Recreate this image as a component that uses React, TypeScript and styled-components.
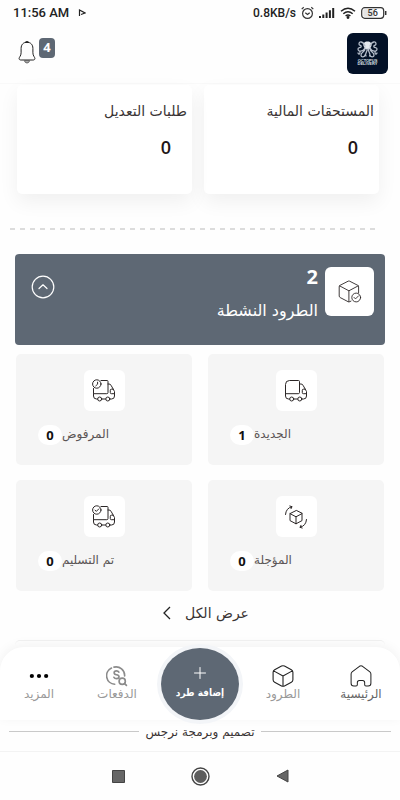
import React from 'react';
import styled, { createGlobalStyle } from 'styled-components';

const slate = '#5e6874';
const arabic = '"DejaVu Sans", sans-serif';

const GlobalStyle = createGlobalStyle`
  * { box-sizing: border-box; }
  body { margin: 0; background: #fefefe; color: #3a3434; font-family: ${arabic}; }
  button { border: 0; padding: 0; background: none; font: inherit; color: inherit; cursor: pointer; }
  a { color: inherit; text-decoration: none; }
  h2, h3, p { margin: 0; font-weight: 400; }
  svg { display: block; flex: none; }
`;

const Screen = styled.div`
  display: flex;
  flex-direction: column;
  min-height: 100vh;
`;

const StatusBar = styled.div`
  display: flex;
  align-items: center;
  height: 26px;
  padding: 0 13px;
  font: 500 13px/24px Roboto, sans-serif;
  color: #222;
`;

const StatusGroup = styled.div<{ $end?: boolean }>`
  display: flex;
  align-items: center;
  gap: ${(p) => (p.$end ? 5 : 9)}px;
  margin-left: ${(p) => (p.$end ? 'auto' : '0')};
  font-size: ${(p) => (p.$end ? 12 : 13)}px;
`;

const Header = styled.header`
  display: flex;
  justify-content: space-between;
  align-items: flex-start;
  height: 58px;
  padding: 7px 12px 0 18px;
  border-bottom: 1px solid #f9f9f9;
`;

const BellButton = styled.button`
  display: flex;
  align-items: flex-end;
  gap: 3px;
  padding-top: 5px;
`;

const BellBadge = styled.span`
  width: 16px;
  height: 20px;
  margin-bottom: 6px;
  border-radius: 4px;
  background: ${slate};
  color: #fff;
  font: 700 13px/19px "Open Sans", sans-serif;
`;

const Content = styled.main`
  display: flex;
  flex-direction: column;
  flex: 1;
`;

const SummaryRow = styled.section`
  display: grid;
  grid-template-columns: 1fr 1fr;
  gap: 12px;
  padding: 1px 21px 0 17px;
`;

const SummaryCard = styled.article`
  height: 109px;
  padding: 14px 5px 0;
  border-radius: 5px;
  background: #fff;
  box-shadow: 0 8px 20px rgba(0, 0, 0, 0.06);
`;

const SummaryTitle = styled.h3`
  font-size: 14px;
  line-height: 24px;
  white-space: nowrap;
`;

const SummaryValue = styled.p`
  padding: 12px 16px 0 0;
  font: 600 18px/24px "Open Sans", sans-serif;
  color: #211517;
`;

const Dashes = styled.hr`
  height: 2px;
  margin: 34px 20px 24px 10px;
  border: 0;
  background: repeating-linear-gradient(90deg, #dcdcdc 0 5px, transparent 5px 10px);
`;

const ActivePanel = styled.section`
  display: flex;
  align-items: flex-start;
  height: 91px;
  margin: 0 15px;
  padding: 13px 11px 0 16px;
  border-radius: 4px;
  background: ${slate};
  color: #fff;
`;

const IconTile = styled.div<{ $size: number }>`
  display: grid;
  place-items: center;
  width: ${(p) => p.$size}px;
  height: ${(p) => p.$size}px;
  border-radius: 6px;
  background: #fff;
  color: #2b2626;
`;

const PanelText = styled.div`
  flex: 1;
  padding-right: 7px;
`;

const PanelCount = styled.p`
  font: 700 20px/20px "Noto Sans", sans-serif;
`;

const PanelTitle = styled.h2`
  padding-top: 11px;
  font-size: 16px;
  line-height: 26px;
`;

const CollapseButton = styled.button`
  margin-top: 8px;
`;

const TileGrid = styled.section`
  display: grid;
  grid-template-columns: 1fr 1fr;
  gap: 15px 16px;
  padding: 9px 16px 0;
`;

const Tile = styled.a`
  display: flex;
  flex-direction: column;
  align-items: center;
  height: 111px;
  padding-top: 16px;
  border-radius: 5px;
  background: #f5f5f5;
`;

const TileCaption = styled.div`
  display: flex;
  justify-content: flex-end;
  align-items: flex-start;
  align-self: stretch;
  margin-top: 14px;
  padding-left: 22px;
  font-size: 12px;
  line-height: 18px;
  color: #5a5454;
`;

const CountPill = styled.span`
  width: 24px;
  height: 20px;
  border-radius: 10px;
  background: #fff;
  color: #111;
  text-align: center;
  font: 700 13px/20px "Open Sans", sans-serif;
`;

const ViewAll = styled.a`
  display: flex;
  align-items: center;
  align-self: center;
  gap: 14px;
  margin-top: 8px;
  padding-left: 12px;
  height: 28px;
  font-size: 14px;
`;

const NextSection = styled.div`
  height: 7px;
  margin: 13px 15px 0;
  border-top: 1px solid #f1f1f1;
  border-radius: 5px 5px 0 0;
`;

const BottomNav = styled.nav`
  display: grid;
  grid-template-columns: 1fr 1fr 88px 1fr 1fr;
  height: 73px;
  border-radius: 24px 24px 0 0;
  background: #fff;
  box-shadow: 0 -2px 12px rgba(0, 0, 0, 0.05);
`;

const NavItem = styled.a<{ $active?: boolean }>`
  display: flex;
  flex-direction: column;
  align-items: center;
  padding-top: 18px;
  color: ${(p) => (p.$active ? '#666' : '#999')};
  font-size: 12px;
  line-height: 14px;
  white-space: nowrap;
`;

const NavIcon = styled.span<{ $muted?: boolean }>`
  display: grid;
  place-items: center;
  height: 22px;
  color: ${(p) => (p.$muted ? '#8b8b8b' : '#222')};
`;

const AddButton = styled.button`
  display: flex;
  flex-direction: column;
  align-items: center;
  justify-self: center;
  width: 78px;
  height: 72px;
  margin-top: 1px;
  padding-top: 19px;
  border-radius: 50%;
  background: ${slate};
  box-shadow: 0 0 0 4px #f3f5f8;
  color: #fff;
  font: 700 10px/14px "DejaVu Sans Condensed", "DejaVu Sans", sans-serif;
  gap: 7px;
`;

const Credit = styled.footer`
  display: flex;
  align-items: center;
  gap: 7px;
  height: 32px;
  padding: 0 9px 8px;
  border-bottom: 1px solid #f3f3f3;
  font-size: 12px;
  line-height: 20px;

  &::before,
  &::after {
    content: '';
    flex: 1;
    height: 1px;
    background: #c9c9c9;
  }
`;

const SystemBar = styled.div`
  display: flex;
  justify-content: center;
  align-items: center;
  gap: 66px;
  height: 48px;
`;

type StrokeProps = { size: number; width?: number; view?: number; children: React.ReactNode };

const Stroke = ({ size, children, width = 1, view = 24 }: StrokeProps) => (
  <svg width={size} height={size} viewBox={`0 0 ${view} ${view}`} fill="none" stroke="currentColor" strokeWidth={width} strokeLinecap="round" strokeLinejoin="round" aria-hidden="true">
    {children}
  </svg>
);

const Cube = () => (
  <Stroke size={22} width={1.2}>
    <path d="M10.4 1.2 2.9 5.1Q1.2 6 1.2 7.8v8.4q0 1.8 1.7 2.7l7.5 3.9q1.6.8 3.2 0l7.5-3.9q1.7-.9 1.7-2.7V7.8q0-1.8-1.7-2.7l-7.5-3.9q-1.6-.8-3.2 0ZM1.8 6.4 12 12l10.2-5.6M12 12v11" />
  </Stroke>
);

const CubeCheck = () => (
  <Stroke size={24} width={0.9}>
    <path d="M13 21.1 11.7 21.7q-.8.3-1.6 0l-8-4.2q-.9-.5-.9-1.5V6.8q0-1 .9-1.5l8-4.1q.8-.4 1.6 0l8 4.1q.9.5.9 1.5v6.1M1.5 5.8l9.4 5 9.4-5M10.9 10.8v10.9" />
    <circle cx="18.2" cy="17.5" r="4.4" fill="#fff" />
    <path d="m16 17.4 1.5 1.5 3-3" />
  </Stroke>
);

const Truck = ({ mark }: { mark?: 'clock' | 'check' }) => (
  <Stroke size={24} width={1}>
    {mark ? <path d="M9 1.5h6.1q.9 0 .9.9v11.1q0 1.2-1.2 1.2H1.5V9.5" /> : <path d="M1.5 14.7V5.5q0-4 4-4h9q1 0 1 1v11q0 1.2-1.2 1.2H1.5" />}
    <path d="M1.5 14.7V17q0 3 3 3h1M10 20h3.5M18 20h1.5q3 0 3-3v-4.5L19 6.2Q18.2 5 17 5h-1M22.5 14.7h-3.2q-1 0-1-1v-2.5q0-1 1-1h1.9" />
    <circle cx="7.7" cy="20" r="2" />
    <circle cx="15.8" cy="20" r="2" />
    {mark && <circle cx="4.8" cy="5" r="4.2" fill="#fff" />}
    {mark === 'clock' && <path d="M5.6 3.2v2L3.8 6.8" />}
    {mark === 'check' && <path d="m3 5.1 1.3 1.3 2.6-2.6" />}
  </Stroke>
);

const CubeCycle = () => (
  <Stroke size={24} width={1}>
    <path d="M12 5.6 6 8.6v7l6 3.2 6-3.2v-7ZM6 8.6l6 3.2 6-3.2M12 11.8v7M1.5 9.5Q2 3 7.8 1.8M5.8 1l2.2.7-1 2M22.5 14.5q-.5 6.5-6.3 7.7M18.2 23l-2.2-.7 1-2" />
  </Stroke>
);

const House = () => (
  <Stroke size={22} width={1.1}>
    <path d="M1.2 9.8q0-1.5 1.1-2.4l8-6q1.7-1.2 3.4 0l8 6q1.1.9 1.1 2.4V20q0 3-3 3h-2.4q-1.4 0-1.4-1.4v-2.4q0-2.2-2.2-2.2h-3.6Q8 17 8 19.2v2.4Q8 23 6.600 23H4.200q-3 0-3-3Z" />
  </Stroke>
);

const Payments = () => (
  <Stroke size={22} width={1.8}>
    <path d="M9.5 21A9.3 9.3 0 0 1 6 3.300M8.700 2.300A9.300 9.300 0 0 1 20.3 12M14 7.8q-.7-1.400-2.600-1.400-2.500 0-2.500 2 0 1.800 2.500 2.200 2.800.4 2.800 2.300 0 2-2.700 2-2 0-2.800-1.500" />
    <circle cx="17.7" cy="17.7" r="3.4" />
    <path d="m20.300 20.300 2 2" />
  </Stroke>
);

const Dots = () => (
  <svg width="22" height="22" viewBox="0 0 24 24" fill="#000" aria-hidden="true">
    <circle cx="4.200" cy="12" r="2.300" /><circle cx="12" cy="12" r="2.300" /><circle cx="19.800" cy="12" r="2.300" />
  </svg>
);

const Bell = () => (
  <svg width="18" height="23" viewBox="0 0 18 23" fill="none" stroke="#222" aria-hidden="true">
    <path d="M9 1.2C5.4 1.2 3.1 3.7 3.1 7.3v4.5C3.1 15 1.1 16 1.1 17.6c0 1 .8 1.4 2 1.4h11.8c1.2 0 2-.4 2-1.4 0-1.6-2-2.6-2-5.8V7.3C14.9 3.7 12.6 1.2 9 1.2Z" />
    <path d="M7 1.5Q9-.4 11 1.5Z" fill="#222" />
    <path d="M6.3 19.5Q7 22 9 22t2.7-2.5Z" fill="#aaa" stroke="#666" />
  </svg>
);

const Logo = () => (
  <svg width="41" height="41" viewBox="0 0 41 41" role="img" aria-label="Octopus Delivery">
    <rect width="41" height="41" rx="6" fill="#031127" />
    <path d="M20.5 8.500c-3 0-4.500 2-4 4.300.2 1.200 1.200 2 1.500 3.200h5c.3-1.200 1.300-2 1.500-3.200.5-2.300-1-4.300-4-4.300Z" fill="#e4e8ee" />
    <g fill="none" stroke="#b5bdca" strokeWidth="1.3" strokeLinecap="round">
      <path d="M18 13c-2-5-6-5-6-2 0 2 3 1 2 3-1 1-3 0-3 2 0 3 5 3 7-1M23 13c2-5 6-5 6-2 0 2-3 1-2 3 1 1 3 0 3 2 0 3-5 3-7-1M18 16c0 3-4 3-4 6 0 3 4 2 4 0M23 16c0 3 4 3 4 6 0 3-4 2-4 0M20 16c1 3-3 4-1 7M21.500 16c-1 3 3 4 1 7M11 20c1 2 2 1 2-1M30 20c-1 2-2 1-2-1" />
    </g>
    <g fill="#dce1e8" fontFamily="Liberation Sans, sans-serif" fontWeight="700" fontSize="4" textAnchor="middle">
      <text x="20.500" y="28.500">OCTOPUS</text>
      <text x="20.500" y="32.300">DELIVERY</text>
    </g>
  </svg>
);

const StatusIcons = () => (
  <>
    <svg width="13" height="14" viewBox="0 0 13 14" fill="none" stroke="#333" strokeWidth="1.2" aria-hidden="true">
      <circle cx="6.5" cy="7.5" r="4.9" /><path d="m4.3 6.7 2.2 1.8 2.2-1.8M.7 3.1l2-1.800M12.300 3.100l-2-1.800" />
    </svg>
    <svg width="16" height="12" viewBox="0 0 16 12" fill="#222" aria-hidden="true">
      <path d="M0 9h2v2H0zM3.300 7.500h2V11h-2zM6.600 5.500h2V11h-2zM9.900 3.200h2V11h-2zM13.200 1h2v10h-2z" />
    </svg>
    <svg width="16" height="12" viewBox="0 0 16 12" fill="none" stroke="#222" strokeWidth="1.5" aria-hidden="true">
      <path d="M1 4.300Q8-1.700 15 4.300M3.300 6.700q4.700-4 9.400 0M5.600 9q2.400-2 4.800 0" /><circle cx="8" cy="10.500" r=".7" fill="#222" />
    </svg>
    <svg width="26" height="12" viewBox="0 0 26 12" role="img" aria-label="56%">
      <rect x=".7" y=".7" width="22" height="10.600" rx="3" fill="#fff" stroke="#333" strokeWidth="1.200" />
      <rect x="2.300" y="2.300" width="11" height="7.400" rx="1" fill="#e4e4e4" />
      <path d="M24.700 4v4" stroke="#333" strokeWidth="1.500" />
      <text x="11.700" y="9.200" textAnchor="middle" fontSize="9" fontFamily="Roboto, sans-serif" fill="#333">56</text>
    </svg>
  </>
);

const tiles = [
  { label: 'الجديدة', count: 1, icon: <Truck /> },
  { label: 'المرفوض', count: 0, icon: <Truck mark="clock" /> },
  { label: 'المؤجلة', count: 0, icon: <CubeCycle /> },
  { label: 'تم التسليم', count: 0, icon: <Truck mark="check" /> },
];

export default function App() {
  return (
    <Screen>
      <GlobalStyle />
      <StatusBar>
        <StatusGroup>
          <span>11:56 AM</span>
          <svg width="8" height="8" viewBox="0 0 8 8" fill="none" stroke="#222" strokeWidth="1.2" aria-hidden="true"><path d="M1.500 7V1L7 4 3 5.500" /></svg>
        </StatusGroup>
        <StatusGroup $end>
          <span>0.8KB/s</span>
          <StatusIcons />
        </StatusGroup>
      </StatusBar>

      <Header>
        <BellButton aria-label="الإشعارات 4">
          <Bell />
          <BellBadge>4</BellBadge>
        </BellButton>
        <Logo />
      </Header>

      <Content dir="rtl">
        <SummaryRow>
          <SummaryCard>
            <SummaryTitle>المستحقات المالية</SummaryTitle>
            <SummaryValue>0</SummaryValue>
          </SummaryCard>
          <SummaryCard>
            <SummaryTitle>طلبات التعديل</SummaryTitle>
            <SummaryValue>0</SummaryValue>
          </SummaryCard>
        </SummaryRow>
        <Dashes />
        <ActivePanel>
          <IconTile $size={49}><CubeCheck /></IconTile>
          <PanelText>
            <PanelCount>2</PanelCount>
            <PanelTitle>الطرود النشطة</PanelTitle>
          </PanelText>
          <CollapseButton aria-label="طي">
            <Stroke size={24} width={1.2}><circle cx="12" cy="12" r="10.800" /><path d="m8 13.500 4-3.700 4 3.700" /></Stroke>
          </CollapseButton>
        </ActivePanel>
        <TileGrid>
          {tiles.map((t) => (
            <Tile key={t.label} href="#">
              <IconTile $size={41}>{t.icon}</IconTile>
              <TileCaption>
                <span>{t.label}</span>
                <CountPill>{t.count}</CountPill>
              </TileCaption>
            </Tile>
          ))}
        </TileGrid>
        <ViewAll href="#">
          عرض الكل
          <svg width="8" height="14" viewBox="0 0 8 14" fill="none" stroke="#222" strokeWidth="1.300" aria-hidden="true"><path d="M7 1 1 7l6 6" /></svg>
        </ViewAll>
        <NextSection />
      </Content>

      <BottomNav dir="rtl">
        <NavItem href="#" $active><NavIcon><House /></NavIcon>الرئيسية</NavItem>
        <NavItem href="#"><NavIcon><Cube /></NavIcon>الطرود</NavItem>
        <AddButton>
          <Stroke size={12} view={12} width={1}><path d="M6 .5v11M.5 6h11" /></Stroke>
          إضافة طرد
        </AddButton>
        <NavItem href="#"><NavIcon $muted><Payments /></NavIcon>الدفعات</NavItem>
        <NavItem href="#"><NavIcon><Dots /></NavIcon>المزيد</NavItem>
      </BottomNav>
      <Credit dir="rtl">تصميم وبرمجة نرجس</Credit>
      <SystemBar>
        <svg width="13" height="13" viewBox="0 0 13 13" aria-hidden="true"><path d="M.5.5h12v12H.5z" fill="#666" stroke="#444" /></svg>
        <svg width="19" height="19" viewBox="0 0 19 19" aria-hidden="true"><circle cx="9.500" cy="9.500" r="8.500" fill="#fff" stroke="#444" strokeWidth="1.400" /><circle cx="9.500" cy="9.500" r="6.400" fill="#5d5d5d" /></svg>
        <svg width="13" height="14" viewBox="0 0 13 14" aria-hidden="true"><path d="M12 1v12L1 7Z" fill="#666" stroke="#444" /></svg>
      </SystemBar>
    </Screen>
  );
}
